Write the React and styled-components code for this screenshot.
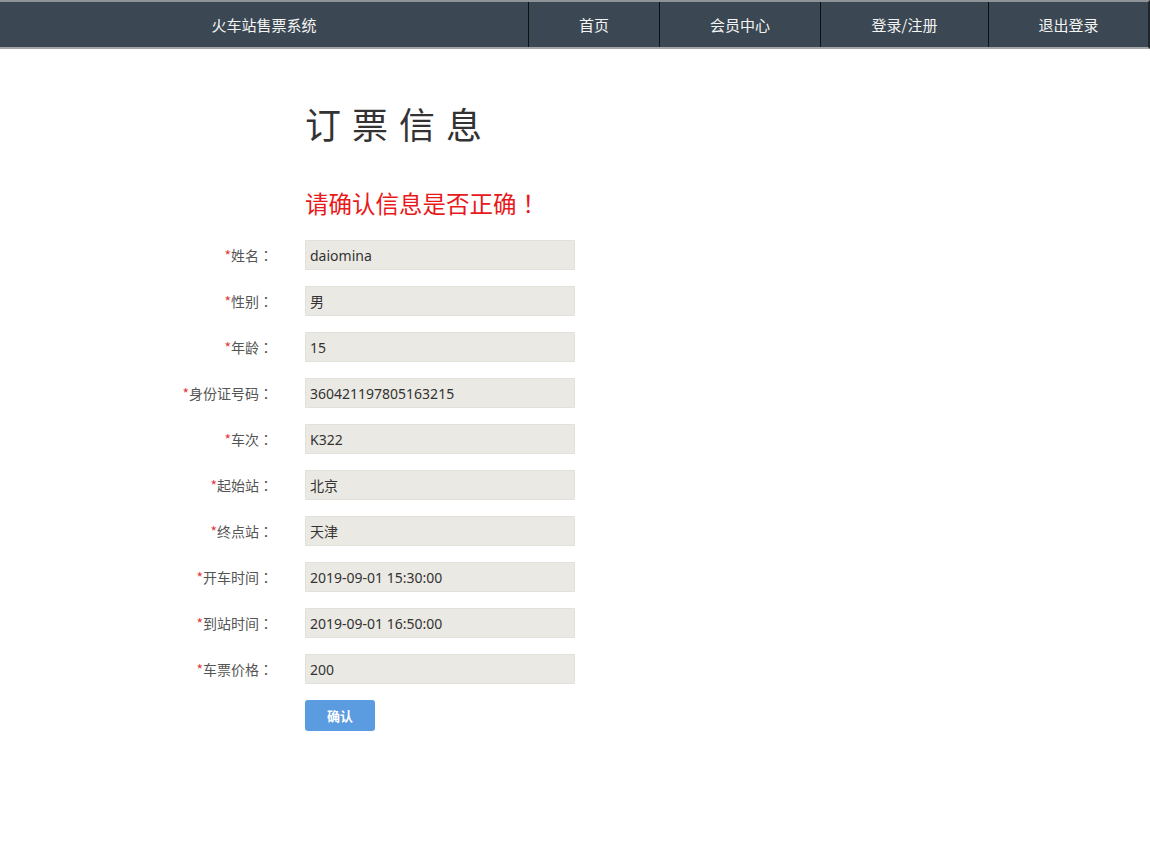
import React from "react";
import styled, { createGlobalStyle } from "styled-components";

const Global = createGlobalStyle`
  html, body { margin: 0; padding: 0; background: #fff; }
  body { font-family: "Noto Sans", "Noto Sans CJK SC", sans-serif; color: #333; }
`;

const Header = styled.div`
  display: flex;
  height: 45px;
  background: #3b4853;
  border-top: 2px solid #8f9499;
  border-bottom: 2px solid #a3a6a9;
  border-right: 2px solid #1e252b;
`;

const NavCell = styled.div`
  width: ${(p) => p.$w}px;
  display: flex;
  align-items: center;
  justify-content: center;
  color: #f4f4f4;
  font-size: 15px;
  font-family: "Noto Sans CJK SC", sans-serif;
  border-right: ${(p) => (p.$last ? "none" : "1px solid #0c1014")};
  box-sizing: border-box;
`;

const Main = styled.div`
  padding-top: 49px;
`;

const Title = styled.h1`
  margin: 0 0 0 305px;
  font-size: 36px;
  font-weight: normal;
  letter-spacing: 11px;
  line-height: 50px;
  color: #333;
  font-family: "Noto Sans CJK SC", sans-serif;
`;

const Notice = styled.div`
  margin: 39px 0 0 305px;
  font-size: 23.5px;
  line-height: 32px;
  color: #e8191b;
  font-family: "Noto Sans CJK SC", sans-serif;
`;

const Punct = styled.span`
  font-family: "Noto Sans CJK TC", sans-serif;
`;

const Form = styled.div`
  margin-top: 21px;
  display: flex;
  flex-direction: column;
  gap: 16px;
`;

const Row = styled.div`
  display: grid;
  grid-template-columns: 273px 270px;
  column-gap: 32px;
  align-items: center;
`;

const Label = styled.label`
  text-align: right;
  font-size: 14px;
  color: #555;
  font-family: "Noto Sans CJK SC", sans-serif;
`;

const Star = styled.span`
  color: #e4393c;
`;

const Field = styled.div`
  box-sizing: border-box;
  height: 30px;
  background: #ebe9e3;
  border: 1px solid #e3e1db;
  padding-left: 4px;
  display: flex;
  align-items: center;
  font-size: 14px;
  color: #333;
`;

const ButtonRow = styled.div`
  margin: 0 0 0 305px;
`;

const Button = styled.button`
  width: 70px;
  height: 31px;
  border: none;
  border-radius: 3px;
  background: #5b9be0;
  color: #fff;
  font-family: "Noto Sans CJK SC", sans-serif;
  font-weight: bold;
  font-size: 13px;
  padding: 0;
`;

const nav = [
  { t: "火车站售票系统", w: 529 },
  { t: "首页", w: 131 },
  { t: "会员中心", w: 161 },
  { t: "登录/注册", w: 168 },
  { t: "退出登录", w: 159 },
];

const fields = [
  ["姓名", "daiomina"],
  ["性别", "男"],
  ["年龄", "15"],
  ["身份证号码", "360421197805163215"],
  ["车次", "K322"],
  ["起始站", "北京"],
  ["终点站", "天津"],
  ["开车时间", "2019-09-01 15:30:00"],
  ["到站时间", "2019-09-01 16:50:00"],
  ["车票价格", "200"],
];

export default function App() {
  return (
    <>
      <Global />
      <Header>
        {nav.map((n, i) => (
          <NavCell key={n.t} $w={n.w} $last={i === nav.length - 1}>
            {n.t}
          </NavCell>
        ))}
      </Header>
      <Main>
        <Title>订票信息</Title>
        <Notice>
          请确认信息是否正确<Punct>！</Punct>
        </Notice>
        <Form>
          {fields.map(([l, v]) => (
            <Row key={l}>
              <Label>
                <Star>*</Star>
                {l}
                <Punct>：</Punct>
              </Label>
              <Field>{v}</Field>
            </Row>
          ))}
          <ButtonRow>
            <Button>确认</Button>
          </ButtonRow>
        </Form>
      </Main>
    </>
  );
}
